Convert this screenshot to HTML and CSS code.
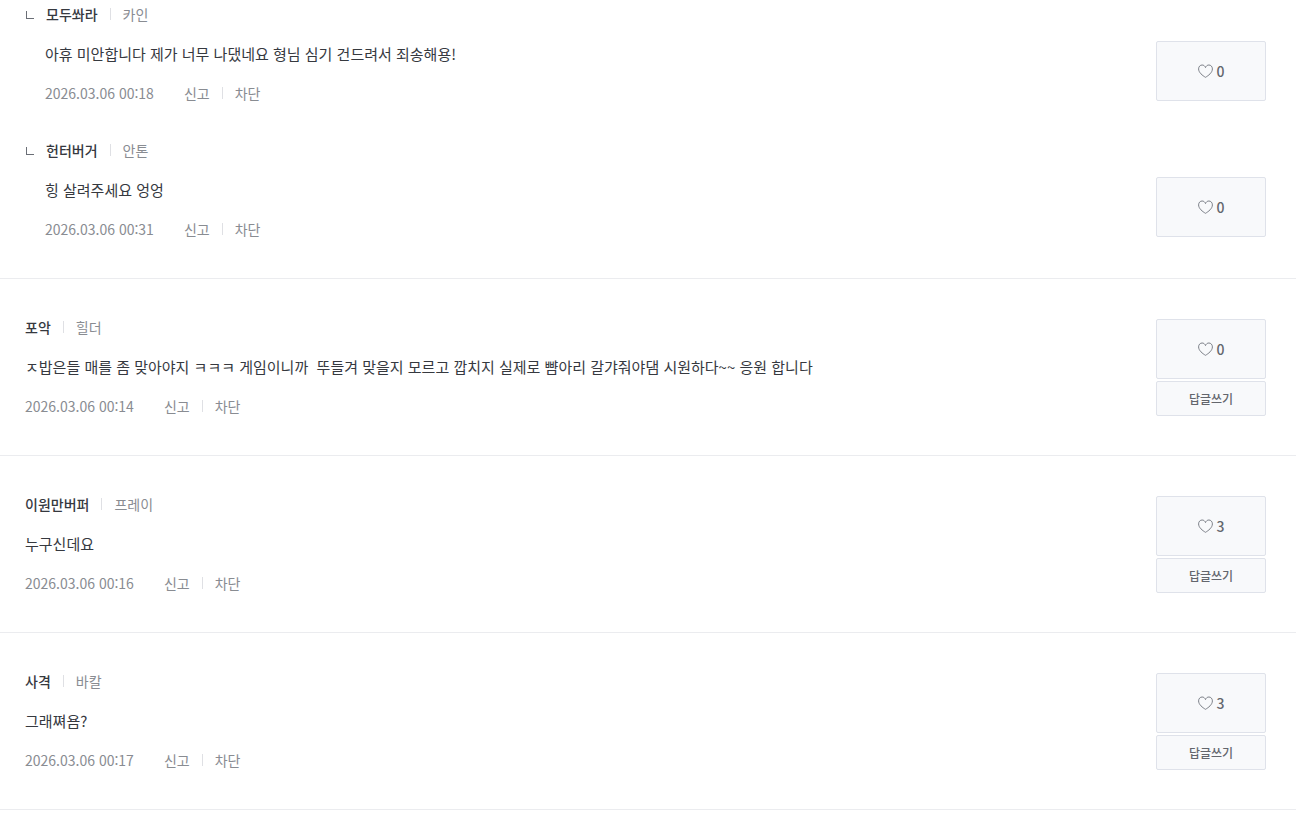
FILE: index.html
```html
<!DOCTYPE html>
<html lang="ko">
<head>
    <meta charset="utf-8">
    <title>댓글</title>
    <link rel="stylesheet" href="styles.css">
</head>
<body>
    <svg class="sprite" aria-hidden="true">
        <symbol id="heart" viewBox="0 0 15 14">
            <path d="M7.5 13.3 C4.6 11.6 0.6 8.6 0.6 4.9 C0.6 2.6 2.2 1 4.1 1 C5.7 1 6.9 2 7.5 3.6 C8.1 2 9.3 1 10.9 1 C12.8 1 14.4 2.6 14.4 4.9 C14.4 8.6 10.4 11.6 7.5 13.3 Z"/>
        </symbol>
    </svg>
    <ul class="comments">
        <li class="comment">
            <div class="reply">
                <div class="body">
                    <p class="writer"><strong>모두쏴라</strong><span class="server">카인</span></p>
                    <p class="text">아휴 미안합니다 제가 너무 나댔네요 형님 심기 건드려서 죄송해용!</p>
                    <div class="info"><span class="date">2026.03.06 00:18</span><a href="#">신고</a><a href="#">차단</a></div>
                </div>
                <div class="btns">
                    <button type="button" class="like"><svg><use href="#heart"/></svg>0</button>
                </div>
            </div>
            <div class="reply">
                <div class="body">
                    <p class="writer"><strong>헌터버거</strong><span class="server">안톤</span></p>
                    <p class="text">힝 살려주세요 엉엉</p>
                    <div class="info"><span class="date">2026.03.06 00:31</span><a href="#">신고</a><a href="#">차단</a></div>
                </div>
                <div class="btns">
                    <button type="button" class="like"><svg><use href="#heart"/></svg>0</button>
                </div>
            </div>
        </li>
        <li class="comment">
            <div class="body">
                <p class="writer"><strong>포악</strong><span class="server">힐더</span></p>
                <p class="text">ㅈ밥은들 매를 좀 맞아야지 ㅋㅋㅋ 게임이니까  뚜들겨 맞을지 모르고 깝치지 실제로 뺨아리 갈갸줘야댐 시원하다~~ 응원 합니다</p>
                <div class="info"><span class="date">2026.03.06 00:14</span><a href="#">신고</a><a href="#">차단</a></div>
            </div>
            <div class="btns">
                <button type="button" class="like"><svg><use href="#heart"/></svg>0</button>
                <button type="button" class="write">답글쓰기</button>
            </div>
        </li>
        <li class="comment">
            <div class="body">
                <p class="writer"><strong>이원만버퍼</strong><span class="server">프레이</span></p>
                <p class="text">누구신데요</p>
                <div class="info"><span class="date">2026.03.06 00:16</span><a href="#">신고</a><a href="#">차단</a></div>
            </div>
            <div class="btns">
                <button type="button" class="like"><svg><use href="#heart"/></svg>3</button>
                <button type="button" class="write">답글쓰기</button>
            </div>
        </li>
        <li class="comment">
            <div class="body">
                <p class="writer"><strong>사격</strong><span class="server">바칼</span></p>
                <p class="text">그래쪄욤?</p>
                <div class="info"><span class="date">2026.03.06 00:17</span><a href="#">신고</a><a href="#">차단</a></div>
            </div>
            <div class="btns">
                <button type="button" class="like"><svg><use href="#heart"/></svg>3</button>
                <button type="button" class="write">답글쓰기</button>
            </div>
        </li>
    </ul>
</body>
</html>
```
FILE: styles.css
```css
body {
    margin: 0;
    background: #fff;
    color: #36393f;
    font-family: "Noto Sans CJK KR", "Noto Sans", sans-serif;
    font-size: 14px;
    line-height: 20px;
}
p, ul {
    margin: 0;
    padding: 0;
}
.sprite {
    position: absolute;
    width: 0;
    height: 0;
}
.comments {
    margin-right: 18px;
    list-style: none;
}
.comment {
    display: flex;
    justify-content: space-between;
    padding: 39px 30px 39px 25px;
    border-bottom: 1px solid #ebecef;
}
.comment:first-child {
    display: block;
    padding-top: 5px;
}
.reply {
    position: relative;
    display: flex;
    justify-content: space-between;
    padding-left: 20px;
}
.reply + .reply {
    margin-top: 38px;
}
.reply::before {
    content: "";
    position: absolute;
    top: 6px;
    left: 1px;
    width: 7px;
    height: 7px;
    border: solid #6a6e76;
    border-width: 0 0 1px 1px;
}
.body {
    display: flex;
    flex-direction: column;
    gap: 19px;
}
.writer, .info {
    display: flex;
    align-items: center;
    color: #898c92;
}
.writer {
    margin-bottom: 2px;
    line-height: 18px;
}
.reply .writer {
    padding-left: 1px;
}
.writer strong {
    color: #36393f;
    font-weight: 500;
}
.server, .info a + a {
    display: flex;
    align-items: center;
}
.server::before, .info a + a::before {
    content: "";
    width: 1px;
    height: 12px;
    margin: 0 12px;
    background: #dfe0e4;
}
.text {
    font-size: 15px;
    white-space: pre-wrap;
}
.info a {
    color: inherit;
    text-decoration: none;
}
.date {
    margin-right: 30px;
}
.btns {
    display: flex;
    flex: none;
    flex-direction: column;
    gap: 2px;
    width: 110px;
    margin-top: 1px;
}
.reply .btns {
    margin-top: 36px;
}
.btns button {
    box-sizing: border-box;
    border: 1px solid #dfe2ea;
    border-radius: 2px;
    background: #f8f9fb;
    color: #63666d;
    font-family: inherit;
    font-weight: 500;
}
.btns .like {
    display: flex;
    align-items: center;
    justify-content: center;
    gap: 4px;
    height: 60px;
    font-size: 14px;
}
.btns .write {
    height: 35px;
    font-size: 12px;
}
.like svg {
    width: 15px;
    height: 14px;
    fill: none;
    stroke: #7b7f87;
}
```
